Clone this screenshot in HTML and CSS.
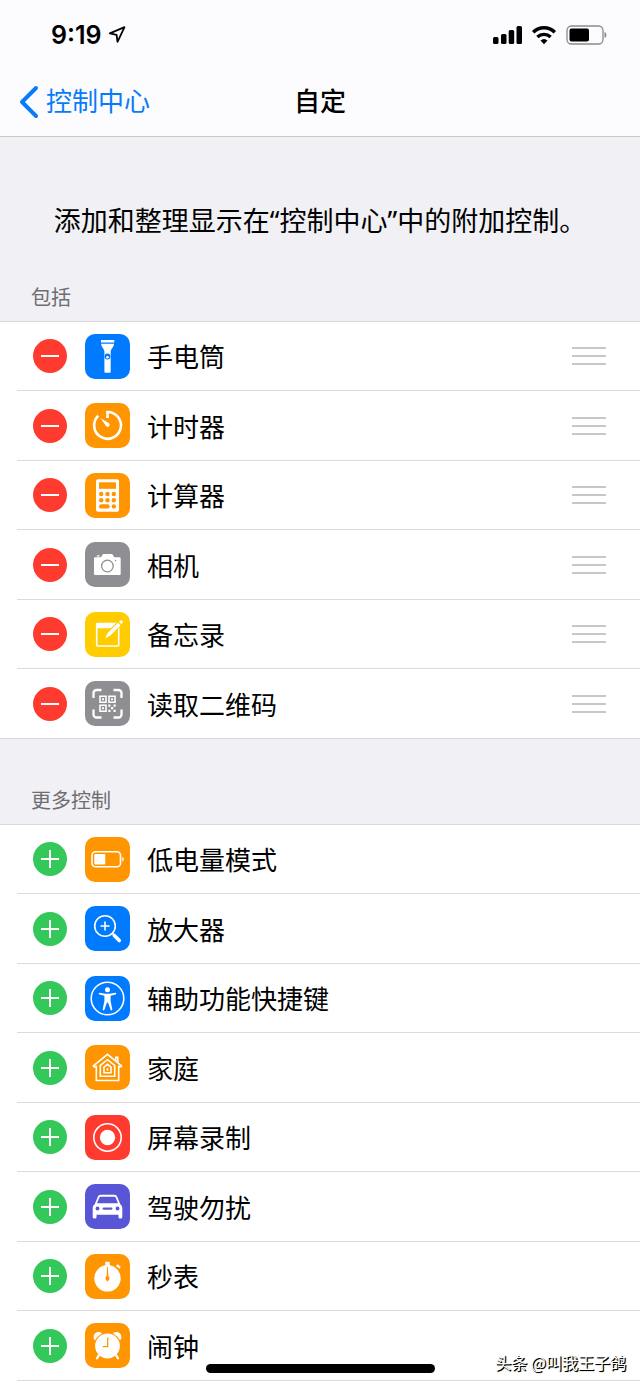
FILE: index.html
```html
<!DOCTYPE html>
<html lang="zh-CN">
<head>
    <meta charset="UTF-8">
    <meta name="viewport" content="width=device-width, initial-scale=1.0">
    <title>自定</title>
    <link rel="stylesheet" href="styles.css">
</head>
<body>
    <header class="top">
        <div class="status-bar">
            <div class="status-left">
                <span class="time">9:19</span>
                <svg width="18" height="18" viewBox="0 0 18 18"><path d="M16.5 1.2L1.8 7.4l6.8 1.5.9 7z" fill="none" stroke="#000" stroke-width="1.8" stroke-linejoin="round"/></svg>
            </div>
            <div class="status-right">
                <svg width="29" height="20" viewBox="0 0 29 20">
                    <rect x="0" y="12" width="5.5" height="7" rx="1.5"/>
                    <rect x="8" y="9" width="5.5" height="10" rx="1.5"/>
                    <rect x="15.700" y="5" width="5.5" height="14" rx="1.5"/>
                    <rect x="23.500" y="1" width="5.5" height="18" rx="1.5"/>
                </svg>
                <svg width="26" height="20" viewBox="0 0 26 20">
                    <path d="M2.2 7.2a15.5 15.5 0 0 1 21.6 0" fill="none" stroke="#000" stroke-width="3.6"/>
                    <path d="M6.4 12a9.6 9.6 0 0 1 13.2 0" fill="none" stroke="#000" stroke-width="3.4"/>
                    <path d="M9.5 15.6a5.2 5.2 0 0 1 7 0L13 19.2z"/>
                </svg>
                <svg width="41" height="20" viewBox="0 0 41 20">
                    <rect x="1" y="1" width="36" height="18" rx="4.5" fill="none" stroke="#8a8a8c" stroke-width="1.3"/>
                    <rect x="3.500" y="3.5" width="19.5" height="13" rx="2"/>
                    <path d="M38.5 7v6c2.6-1 2.6-5 0-6z" fill="#8a8a8c"/>
                </svg>
            </div>
        </div>
        <nav class="nav-bar">
            <a class="back" href="#">
                <svg width="20" height="34" viewBox="0 0 20 34"><path d="M17 3L3 17l14 14" fill="none" stroke="#087bfb" stroke-width="4" stroke-linecap="round" stroke-linejoin="round"/></svg>
                控制中心
            </a>
            <h1>自定</h1>
        </nav>
    </header>

    <main>
        <p class="intro">添加和整理显示在“控制中心”中的附加控制。</p>

        <h2>包括</h2>
        <ul class="list included">
            <li>
                <button class="toggle remove" aria-label="移除手电筒"></button>
                <svg class="icon blue" viewBox="0 0 45 45">
                    <path d="M16 6h13.3v2.5H16zM16.2 9.7H29c0 3.5-3.3 5-3.3 8v20c0 .6-.3 1-.9 1h-4.5c-.6 0-.9-.4-.9-1v-20c0-3-3.2-4.5-3.2-8z"/>
                    <circle class="cut" cx="22.5" cy="22.5" r="2.9"/>
                    <circle cx="22.5" cy="23.3" r="1.3"/>
                </svg>
                <span class="name">手电筒</span>
                <button class="handle" aria-label="移动手电筒"></button>
            </li>
            <li>
                <button class="toggle remove" aria-label="移除计时器"></button>
                <svg class="icon orange" viewBox="0 0 45 45">
                    <path class="line thick" d="M22.5 15V9a13.4 13.4 0 1 1-9.3 3.8"/>
                    <path d="M15.4 15l8.6 5.3a2 2 0 0 1-2.8 2.9z"/>
                </svg>
                <span class="name">计时器</span>
                <button class="handle" aria-label="移动计时器"></button>
            </li>
            <li>
                <button class="toggle remove" aria-label="移除计算器"></button>
                <svg class="icon orange" viewBox="0 0 45 45">
                    <rect x="11" y="6.3" width="23" height="32.4" rx="2"/>
                    <g class="cut">
                        <rect x="14" y="9.3" width="17" height="6.5"/>
                        <circle cx="16.2" cy="21" r="2.2"/><circle cx="22.5" cy="21" r="2.2"/><circle cx="28.8" cy="21" r="2.2"/>
                        <circle cx="16.2" cy="27.2" r="2.2"/><circle cx="22.5" cy="27.2" r="2.2"/><circle cx="28.8" cy="27.2" r="2.2"/>
                        <rect x="14" y="31.2" width="10.7" height="4.4" rx="2.2"/><circle cx="28.8" cy="33.4" r="2.2"/>
                    </g>
                </svg>
                <span class="name">计算器</span>
                <button class="handle" aria-label="移动计算器"></button>
            </li>
            <li>
                <button class="toggle remove" aria-label="移除相机"></button>
                <svg class="icon gray" viewBox="0 0 45 45">
                    <path d="M10.5 15.3h5.2c1 0 1.500-3.3 2.8-3.3h8.3c1.3 0 1.8 3.3 2.8 3.3h4.6c1 0 1.5.5 1.5 1.5v14.7c0 1-.5 1.5-1.5 1.5H10.5c-1 0-1.5-.5-1.5-1.5V16.8c0-1 .5-1.5 1.5-1.5zM11.6 14.6c0-1.7 3.4-1.7 3.4 0z"/>
                    <circle class="cut-line" cx="22.4" cy="24" r="5.8"/>
                    <circle class="cut" cx="30.6" cy="18.5" r=".8"/>
                </svg>
                <span class="name">相机</span>
                <button class="handle" aria-label="移动相机"></button>
            </li>
            <li>
                <button class="toggle remove" aria-label="移除备忘录"></button>
                <svg class="icon yellow" viewBox="0 0 45 45">
                    <rect class="line" x="11.7" y="11.5" width="22" height="22.5" rx="1"/>
                    <path d="M11.5 11h22v5.3h-22z"/>
                    <path class="cut" d="M18.5 28.5l3.2-8L34.5 7.7l4 4-13.3 13z"/>
                    <path d="M20.2 26.3l2.5-5.3L33 10.8l2.6 2.6-10.3 10.2zM34 9.800l1.5-1.3c1.2-.8 3 1 2.2 2.2l-1.2 1.6z"/>
                </svg>
                <span class="name">备忘录</span>
                <button class="handle" aria-label="移动备忘录"></button>
            </li>
            <li>
                <button class="toggle remove" aria-label="移除读取二维码"></button>
                <svg class="icon gray" viewBox="0 0 45 45">
                    <path class="line bracket" d="M8.5 17v-5a3 3 0 0 1 3-3h5M28.5 9h5a3 3 0 0 1 3 3v5M36.5 28.5v5a3 3 0 0 1-3 3h-5M16.5 36.5h-5a3 3 0 0 1-3-3v-5"/>
                    <path class="line" d="M15 15.3h6v6h-6zM24 15.3h6v6h-6zM15 24.3h6v6h-6z"/>
                    <path d="M17 17.3h2v2h-2zM26 17.3h2v2h-2zM17 26.3h2v2h-2zM23.3 23.5h2.2v2.2h-2.2zM28.5 23.5h2.2v2.2h-2.2zM26 26h2.2v2.2H26zM23.3 28.7h2.2v2.2h-2.2zM28.5 28.7h2.2v2.2h-2.2z"/>
                </svg>
                <span class="name">读取二维码</span>
                <button class="handle" aria-label="移动读取二维码"></button>
            </li>
        </ul>

        <h2>更多控制</h2>
        <ul class="list more">
            <li>
                <button class="toggle add" aria-label="添加低电量模式"></button>
                <svg class="icon orange" viewBox="0 0 45 45">
                    <rect class="line" x="7" y="14.7" width="28.5" height="15" rx="3.5"/>
                    <rect x="9.3" y="17" width="11" height="10.4" rx="1"/>
                    <path d="M37.3 19.8v4.8c2-.8 2-4 0-4.8z"/>
                </svg>
                <span class="name">低电量模式</span>
            </li>
            <li>
                <button class="toggle add" aria-label="添加放大器"></button>
                <svg class="icon blue" viewBox="0 0 45 45">
                    <circle class="line" cx="20" cy="20" r="10.3"/>
                    <path class="line" d="M20 15.5v9M15.5 20h9M27.3 27.3l2.5 2.5"/>
                    <path class="line grip" d="M29.3 29.5l5 5"/>
                </svg>
                <span class="name">放大器</span>
            </li>
            <li>
                <button class="toggle add" aria-label="添加辅助功能快捷键"></button>
                <svg class="icon blue" viewBox="0 0 45 45">
                    <circle class="line" cx="22.5" cy="22.5" r="16.3"/>
                    <circle cx="22.5" cy="13.7" r="2.5"/>
                    <path d="M14.5 16.8l6 .9h4l6-.9c1 0 1 1.5.1 1.7l-5 1.2v5.3l1.700 8.3c.1 1.3-1.3 1.5-1.7.5l-2.6-7.3h-1l-2.6 7.3c-.4 1-1.8.8-1.7-.5l1.7-8.3v-5.3l-5-1.2c-.9-.2-.9-1.7.1-1.7z"/>
                </svg>
                <span class="name">辅助功能快捷键</span>
            </li>
            <li>
                <button class="toggle add" aria-label="添加家庭"></button>
                <svg class="icon orange" viewBox="0 0 45 45">
                    <path class="line" d="M11.3 20.5v15h22.4v-15M7.8 21.3L22.5 9.3l14.7 12M8 21.8h3.3M33.7 21.8H37M30.800 15.5v-3.2h2v5"/>
                    <path class="line" d="M15.3 31.3V20.5l7.2-5.8 7.2 5.8v10.8z"/>
                    <path class="line" d="M19 27.7v-5.5l3.5-2.9 3.5 2.9v5.5z"/>
                    <path d="M21.7 23.2h1.6v2.6h-1.6z"/>
                </svg>
                <span class="name">家庭</span>
            </li>
            <li>
                <button class="toggle add" aria-label="添加屏幕录制"></button>
                <svg class="icon red" viewBox="0 0 45 45">
                    <circle class="line" cx="22.5" cy="22.5" r="13.7"/>
                    <circle cx="22.5" cy="22.5" r="7.7"/>
                </svg>
                <span class="name">屏幕录制</span>
            </li>
            <li>
                <button class="toggle add" aria-label="添加驾驶勿扰"></button>
                <svg class="icon purple" viewBox="0 0 45 45">
                    <path d="M9.7 20.3l3-7.3c.6-1.5 1.5-2.2 3-2.2h13.6c1.5 0 2.4.7 3 2.2l3 7.3c1.3 1 2 2.2 2 4V33c0 2-3.8 2-3.8 0v-2.3h-22V33c0 2-3.8 2-3.8 0v-8.7c0-1.8.7-3 2-4z"/>
                    <path class="cut" d="M12 19.3l2.3-5.6c.3-.7.8-1 1.5-1h13.4c.7 0 1.2.3 1.5 1l2.3 5.6z"/>
                    <circle class="cut" cx="12.5" cy="24.5" r="1.9"/><circle class="cut" cx="32.5" cy="24.5" r="1.9"/>
                    <rect class="cut" x="17.5" y="23.5" width="10" height="2.2" rx="1.1"/>
                </svg>
                <span class="name">驾驶勿扰</span>
            </li>
            <li>
                <button class="toggle add" aria-label="添加秒表"></button>
                <svg class="icon orange" viewBox="0 0 45 45">
                    <circle cx="22.5" cy="24.3" r="13.2"/>
                    <path d="M20.3 7.8h4.4v4h-4.4zM32.600 10.2l3.2 2.7-1.4 1.9-3.4-2.9z"/>
                    <path class="cut" d="M22.1 13h.8l.5 9.3c2 1 1.3 3-.9 5.3-2.2-2.3-2.9-4.300-.9-5.300z"/>
                </svg>
                <span class="name">秒表</span>
            </li>
            <li>
                <button class="toggle add" aria-label="添加闹钟"></button>
                <svg class="icon orange" viewBox="0 0 45 45">
                    <path class="line feet" d="M14 32l-2 3.3M31 32l2 3.3"/>
                    <circle cx="13.5" cy="14" r="4.9"/><circle cx="31.5" cy="14" r="4.9"/>
                    <circle class="cut" cx="22.5" cy="23" r="13.6"/>
                    <path class="line feet" d="M14.500 31.500l-2.500 3.800M30.500 31.500l2.500 3.800"/>
                    <circle cx="22.5" cy="23" r="12.4"/>
                    <path class="cut-line" d="M22.7 14.5v9.2h-5"/>
                </svg>
                <span class="name">闹钟</span>
            </li>
        </ul>
    </main>

    <div class="home-indicator"></div>
    <div class="watermark">头条 @叫我王子鸽</div>
</body>
</html>
```
FILE: styles.css
```css
* {
    box-sizing: border-box;
}
body {
    font-family: "Noto Sans CJK SC", sans-serif;
    background-color: #fff;
    color: #000;
    margin: 0;
    min-height: 100vh;
    position: relative;
}
h1, h2, p, ul {
    margin: 0;
    padding: 0;
}
button {
    border: none;
    padding: 0;
    cursor: pointer;
}

/* 状态栏和导航栏 */
.top {
    background-color: #fcfcfe;
    border-bottom: 1px solid #c8c8cb;
    font-family: Inter, "Noto Sans CJK SC", sans-serif;
}
.status-bar {
    display: flex;
    justify-content: space-between;
    align-items: center;
    height: 68px;
    padding: 2px 33px 0 51px;
}
.status-left {
    display: flex;
    align-items: center;
    gap: 6px;
}
.time {
    font-size: 25px;
    font-weight: 600;
    line-height: 28px;
}
.status-right {
    display: flex;
    align-items: center;
    gap: 9px;
}
.nav-bar {
    display: grid;
    grid-template-columns: 1fr auto 1fr;
    align-items: center;
    height: 68px;
    padding: 0 19px;
    line-height: 34px;
}
.back {
    display: flex;
    align-items: center;
    gap: 7px;
    color: #087bfb;
    font-size: 26px;
    text-decoration: none;
}
h1 {
    font-size: 26px;
    font-weight: 500;
}

/* 列表 */
main {
    background-color: #f0f0f5;
}
.intro {
    padding: 64px 16px 0;
    height: 144px;
    font-family: "Noto Sans", "Noto Sans CJK SC", sans-serif;
    font-size: 27px;
    line-height: 40px;
    text-align: center;
}
h2 {
    padding: 0 31px 8px;
    color: #6d6d72;
    font-size: 20px;
    font-weight: 400;
    line-height: 32px;
}
.list {
    background-color: #fff;
    border-top: 1px solid #d9d9dc;
    list-style: none;
}
.included {
    border-bottom: 1px solid #d9d9dc;
    margin-bottom: 45px;
}
.list li {
    display: flex;
    align-items: center;
    height: 69px;
    margin-left: 17px;
    padding: 0 34px 0 16px;
    border-bottom: 1px solid #dcdcde;
}
.list li:nth-child(even) {
    height: 70px;
}
.included li:last-child {
    border-bottom: none;
    height: 69px;
}
.name {
    flex: 1;
    font-size: 26px;
    line-height: 40px;
}

/* 添加和移除按钮 */
.toggle {
    position: relative;
    width: 34px;
    height: 34px;
    margin-right: 18px;
    border-radius: 50%;
}
.remove {
    background-color: #ff3b30;
}
.add {
    background-color: #34c759;
}
.toggle::before,
.add::after {
    content: "";
    position: absolute;
    top: 16px;
    left: 8px;
    width: 18px;
    height: 2px;
    background-color: #fff;
}
.add::after {
    transform: rotate(90deg);
}
.handle {
    width: 34px;
    height: 18px;
    border-top: 2px solid #c7c7cb;
    border-bottom: 2px solid #c7c7cb;
    background: linear-gradient(#c7c7cb, #c7c7cb) center / 100% 2px no-repeat;
}

/* 图标 */
.icon {
    width: 45px;
    height: 45px;
    margin-right: 17px;
    border-radius: 10px;
    background-color: var(--tile);
    fill: #fff;
}
.line {
    fill: none;
    stroke: #fff;
    stroke-width: 1.6;
}
.thick {
    stroke-width: 2.6;
}
.bracket {
    stroke-width: 2.3;
}
.grip {
    stroke-width: 3.6;
    stroke-linecap: round;
}
.feet {
    stroke-width: 2;
    stroke-linecap: round;
}
.cut {
    fill: var(--tile);
}
.cut-line {
    fill: none;
    stroke: var(--tile);
    stroke-width: 1.3;
}
.blue {
    --tile: #007aff;
}
.orange {
    --tile: #ff9500;
}
.gray {
    --tile: #8e8e93;
}
.yellow {
    --tile: #ffcc00;
}
.red {
    --tile: #ff3b30;
}
.purple {
    --tile: #5856d6;
}

/* 浮在页面上的元素 */
.home-indicator {
    position: absolute;
    bottom: 12px;
    left: 50%;
    width: 229px;
    height: 9px;
    margin-left: -114px;
    border-radius: 5px;
    background-color: #000;
}
.watermark {
    position: absolute;
    right: 14px;
    bottom: 11px;
    color: #fff;
    font-size: 16px;
    line-height: 24px;
    text-shadow: 1px 1px 1px #000, 1px 1px 0 #000;
}
```
